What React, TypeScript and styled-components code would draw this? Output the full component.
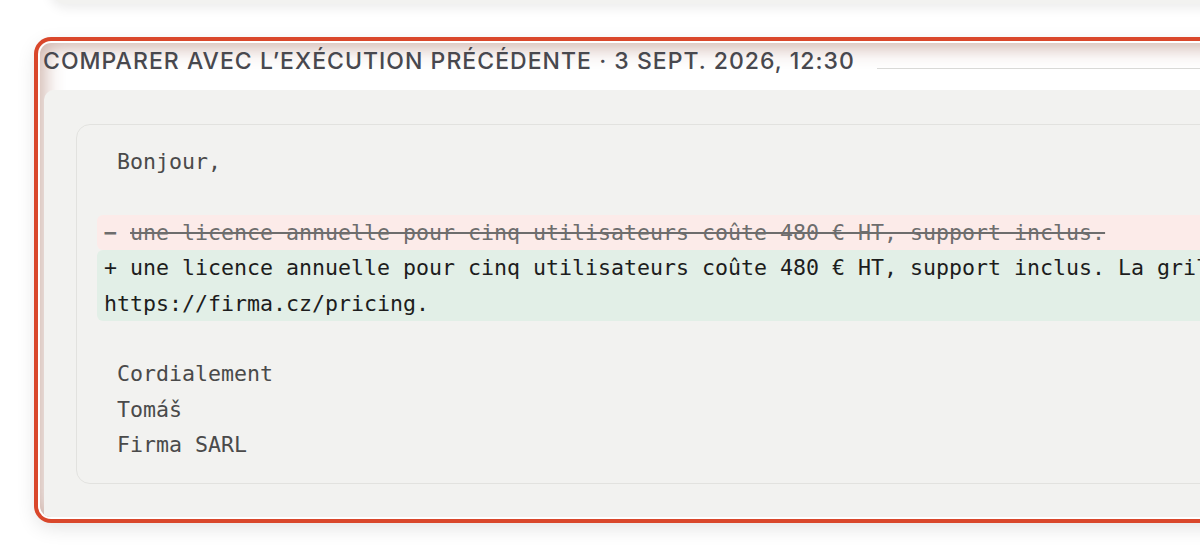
import React from "react";
import styled, { createGlobalStyle } from "styled-components";

const GlobalStyle = createGlobalStyle`
  html {
    overflow: hidden;
  }
  body {
    margin: 0;
    padding: 0;
    min-height: 560px;
    background: #ffffff;
    font-family: Inter, "Noto Sans", sans-serif;
  }
`;

const Page = styled.div`
  display: flex;
  flex-direction: column;
  gap: 39px;
  padding-left: 40px;
  width: 1800px;
`;

const PrevCard = styled.div`
  height: 44px;
  margin-top: -40px;
  margin-left: 10px;
  border-radius: 16px;
  background: #f2f2f0;
  box-shadow: 0 4px 12px rgba(0, 0, 0, 0.08);
`;

const Section = styled.section`
  display: flex;
  flex-direction: column;
  height: 474px;
  border-radius: 11px;
  background: #ffffff;
  box-shadow: 0 0 0 2px #ffffff, 0 0 0 6px #d9472b,
    0 6px 20px 4px rgba(0, 0, 0, 0.12),
    inset 0 0 20px 4px rgba(140, 75, 55, 0.45);
  overflow: hidden;
`;

const Heading = styled.div`
  display: flex;
  align-items: flex-end;
  gap: 22px;
  height: 47px;
  padding-left: 3px;
  box-sizing: border-box;
`;

const Title = styled.h3`
  margin: 4px 0 0;
  font-family: Inter, "Noto Sans", sans-serif;
  font-size: 23px;
  font-weight: 500;
  letter-spacing: 0.045em;
  line-height: 28px;
  color: #48484e;
  text-transform: uppercase;
  white-space: nowrap;
  align-self: flex-start;
`;

const Rule = styled.div`
  flex: 1;
  height: 1px;
  background: #d9d9d7;
  margin-bottom: 21px;
`;

const Panel = styled.div`
  flex: 1;
  margin-left: 4px;
  padding: 34px 0 0 32px;
  border-radius: 10px 0 0 0;
  background: #f2f2f0;
`;

const DiffCard = styled.div`
  padding: 19px 20px 20px;
  border: 1px solid #e2e2df;
  border-radius: 14px;
  background: #f2f2f0;
  font-family: "DejaVu Sans Mono", "Liberation Mono", monospace;
  font-size: 21.6px;
  line-height: 35.4px;
`;

type Kind = "same" | "removed" | "added";

const Line = styled.div<{ $kind: Kind }>`
  padding: 0 7px;
  min-height: 35.4px;
  white-space: pre-wrap;
  border-radius: 6px;
  color: ${(p) =>
    p.$kind === "removed" ? "#6d6d6d" : p.$kind === "added" ? "#1d1d1d" : "#4a4a4a"};
  background: ${(p) =>
    p.$kind === "removed" ? "#fcebe9" : p.$kind === "added" ? "#e2efe7" : "transparent"};
`;

const Minus = styled.span`
  font-weight: 700;
`;

const Struck = styled.span`
  text-decoration: line-through;
  text-decoration-thickness: 1.5px;
`;

const diff: { kind: Kind; text: string }[] = [
  { kind: "same", text: " Bonjour," },
  { kind: "same", text: " " },
  { kind: "removed", text: "une licence annuelle pour cinq utilisateurs coûte 480 € HT, support inclus." },
  {
    kind: "added",
    text: "+ une licence annuelle pour cinq utilisateurs coûte 480 € HT, support inclus. La grille tarifaire :\nhttps://firma.cz/pricing.",
  },
  { kind: "same", text: " " },
  { kind: "same", text: " Cordialement" },
  { kind: "same", text: " Tomáš" },
  { kind: "same", text: " Firma SARL" },
];

export default function App() {
  return (
    <>
      <GlobalStyle />
      <Page>
        <PrevCard />
        <Section>
          <Heading>
            <Title>Comparer avec l’exécution précédente · 3 sept. 2026, 12:30</Title>
            <Rule />
          </Heading>
          <Panel>
            <DiffCard>
              {diff.map((l, i) => (
                <Line key={i} $kind={l.kind}>
                  {l.kind === "removed" ? (
                    <>
                      <Minus>−</Minus> <Struck>{l.text}</Struck>
                    </>
                  ) : (
                    l.text
                  )}
                </Line>
              ))}
            </DiffCard>
          </Panel>
        </Section>
      </Page>
    </>
  );
}
